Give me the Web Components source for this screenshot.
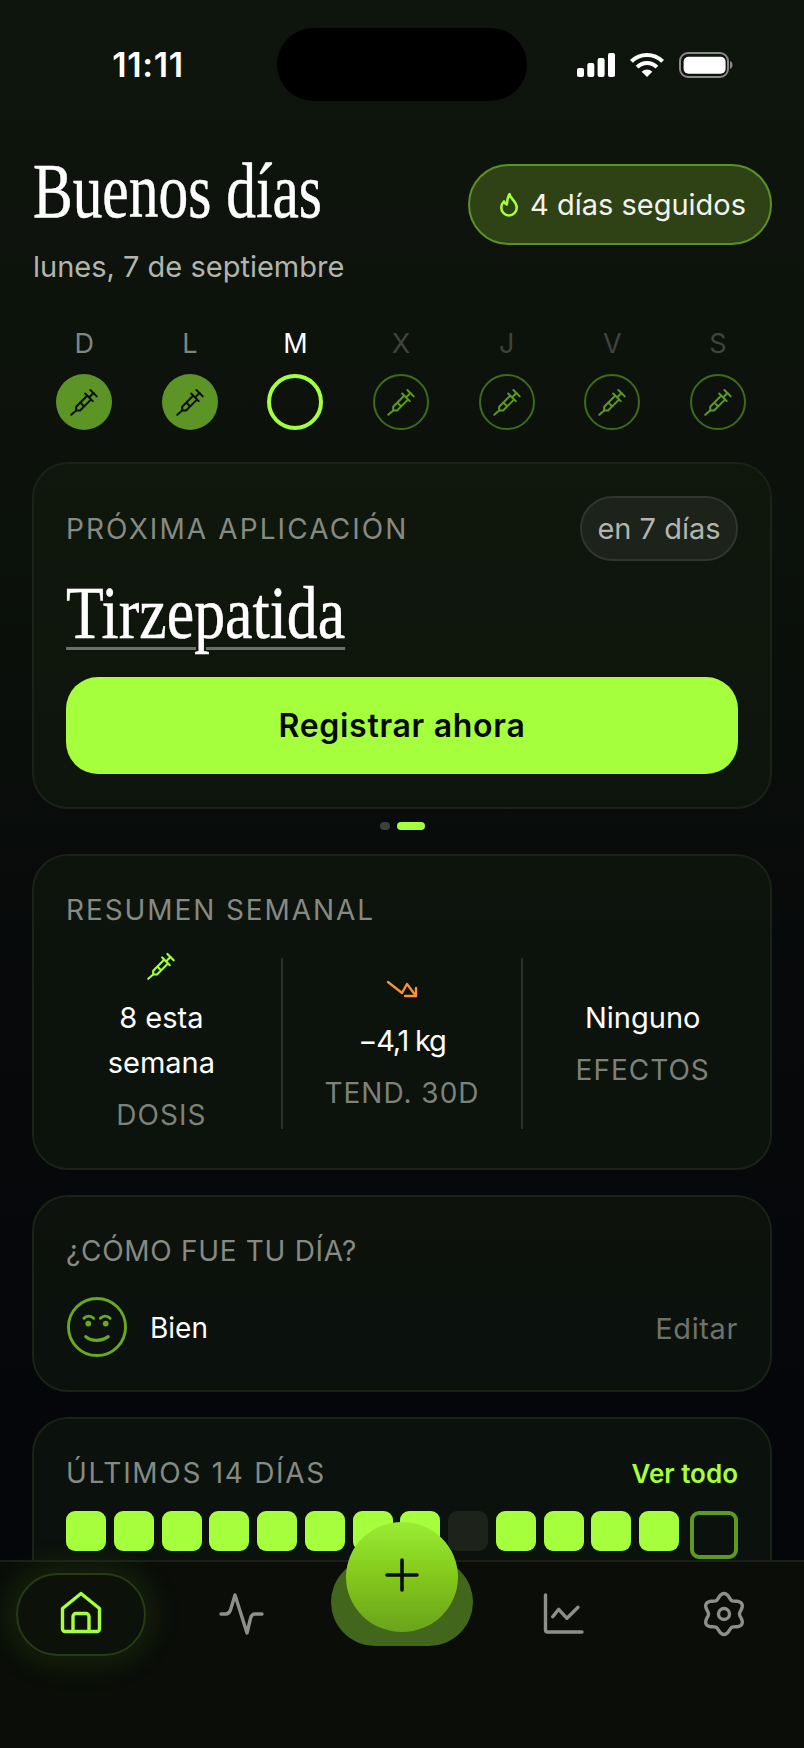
<!DOCTYPE html>
<html lang="es">
<head>
<meta charset="utf-8">
<title>Inicio</title>
<style>
    html, body { margin: 0; padding: 0; background: #07090a; }
    body { width: 804px; height: 1748px; overflow: hidden; }
</style>
</head>
<body>
<app-screen>
    <status-bar></status-bar>
    <home-header></home-header>
    <week-strip></week-strip>
    <next-dose></next-dose>
    <page-dots></page-dots>
    <week-summary></week-summary>
    <day-mood></day-mood>
    <last-days></last-days>
    <tab-bar slot="tabs"></tab-bar>
</app-screen>

<script>
const SANS = `font-family: Inter, "Liberation Sans", sans-serif;`;
const SYRINGE = `
    <path d="M16.500 3.500l4.500 4.500"/><path d="M18.700 5.700l-3 3"/><path d="M12.800 6l5.400 5.400"/>
    <path d="M14.200 7.600l-7.700 7.700v2.700h2.700l7.700-7.700"/><path d="M9.600 12.600l2.200 2.200"/><path d="M6.500 18L3 21"/>`;

class AppScreen extends HTMLElement {
    constructor() {
        super();
        this.attachShadow({mode: "open"}).innerHTML = `
            <style>
                :host {
                    display: flex;
                    flex-direction: column;
                    width: 804px;
                    height: 1748px;
                    color: #fff;
                    background: linear-gradient(180deg, #0e150d 0, #0c120b 500px, #07090a 1000px, #05060a 1500px);
                    ${SANS}
                }
                .scroll { flex: 1; min-height: 0; overflow: hidden; }
            </style>
            <div class="scroll"><slot></slot></div>
            <slot name="tabs"></slot>`;
    }
}

class StatusBar extends HTMLElement {
    constructor() {
        super();
        this.attachShadow({mode: "open"}).innerHTML = `
            <style>
                :host { display: flex; align-items: center; height: 73px; padding: 28px 0 0; position: relative; }
                .time { width: 296px; text-align: center; font-size: 34px; font-weight: 600; letter-spacing: .6px; }
                .island { position: absolute; left: 277px; top: 28px; width: 250px; height: 73px; border-radius: 37px; background: #000; }
                svg { position: absolute; top: 50px; left: 575px; }
            </style>
            <span class="time">11:11</span>
            <div class="island"></div>
            <svg width="160" height="30" viewBox="0 0 160 30" fill="#fff">
                <rect x="2" y="18" width="7" height="9" rx="2"/>
                <rect x="12.300" y="13" width="7" height="14" rx="2"/>
                <rect x="22.600" y="8" width="7" height="19" rx="2"/>
                <rect x="33" y="3" width="7" height="24" rx="2"/>
                <path d="M72 27l-5.300-5.300a7.500 7.500 0 0 1 10.600 0z"/>
                <path d="M62.100 17.100a14 14 0 0 1 19.800 0" fill="none" stroke="#fff" stroke-width="4"/>
                <path d="M56.400 11.400a22 22 0 0 1 31.200 0" fill="none" stroke="#fff" stroke-width="4"/>
                <rect x="105" y="3" width="48" height="24" rx="8" fill="none" stroke="#8a8a8a" stroke-width="2"/>
                <rect x="108.600" y="6.700" width="42" height="17" rx="5"/>
                <path d="M155 11v8c1.500-.5 2.500-2 2.500-4s-1-3.500-2.500-4z" fill="#8a8a8a"/>
            </svg>`;
    }
}

class HomeHeader extends HTMLElement {
    constructor() {
        super();
        this.attachShadow({mode: "open"}).innerHTML = `
            <style>
                :host { display: flex; justify-content: space-between; padding: 52px 32px 0 33px; height: 208px; box-sizing: border-box; }
                h1 {
                    margin: 0; font: 400 78px/76px "Liberation Serif", serif; -webkit-text-stroke: .5px #fff;
                    transform: scaleX(.762); transform-origin: 0 0; white-space: nowrap; width: 287px;
                }
                p { margin: 20px 0 0; font-size: 29px; line-height: 36px; color: #b2b5ae; white-space: nowrap; }
                .streak {
                    display: flex; align-items: center; gap: 11px; box-sizing: border-box;
                    width: 304px; height: 81px; margin-top: 11px; padding-left: 29px;
                    border-radius: 41px; background: #2f4215; border: 2px solid #5c9126;
                    font-size: 29px; color: #f1f3ee; white-space: nowrap;
                }
            </style>
            <div>
                <h1>Buenos días</h1>
                <p>lunes, 7 de septiembre</p>
            </div>
            <div class="streak">
                <svg width="20" height="26" viewBox="0 0 22 28" fill="none" stroke="#a6ff3d" stroke-width="2.800" stroke-linejoin="round">
                    <path d="M11.500 2c1 5 8 8 8 15a8.500 8.500 0 0 1-17 0c0-3 1-5 3-7 .500 2 1.500 3 3 3.500C9 9.500 9.500 5 11.500 2z"/>
                </svg>
                4 días seguidos
            </div>`;
    }
}

class WeekStrip extends HTMLElement {
    constructor() {
        super();
        const days = [["D", "done"], ["L", "done"], ["M", "today"], ["X", ""], ["J", ""], ["V", ""], ["S", ""]];
        const cells = days.map(([d, state]) => `
            <div class="day ${state}">
                <span>${d}</span>
                <div class="ring">${state === "today" ? "" : `
                    <svg width="34" height="34" viewBox="0 0 24 24" fill="none" stroke="currentColor" stroke-width="1.400" stroke-linecap="round" stroke-linejoin="round">${SYRINGE}</svg>`}
                </div>
            </div>`).join("");
        this.attachShadow({mode: "open"}).innerHTML = `
            <style>
                :host { display: grid; grid-template-columns: repeat(7, 105.6px); padding: 0 0 0 31.500px; height: 153px; }
                .day { display: flex; flex-direction: column; align-items: center; }
                span { font-size: 27px; line-height: 32px; margin-top: 19px; height: 32px; color: #3f433e; }
                .done span { color: #81857f; }
                .today span { color: #fff; }
                .ring {
                    box-sizing: border-box; width: 56px; height: 56px; margin-top: 14px; border-radius: 50%;
                    border: 2px solid #3f6a1a; color: #5c9a22;
                    display: flex; align-items: center; justify-content: center;
                }
                .done .ring { background: #5c9426; border: 0; color: #0a0e08; }
                .today .ring { border: 4px solid #a6ff3d; }
            </style>
            ${cells}`;
    }
}

class InfoCard extends HTMLElement {
    constructor() {
        super();
        this.attachShadow({mode: "open"}).innerHTML = `
            <style>
                :host {
                    display: block; box-sizing: border-box; margin: 0 32px 0 32px;
                    border: 2px solid #1b2218; border-radius: 36px; background: rgba(20, 30, 15, .45);
                    padding: 32px;
                }
            </style>
            <slot></slot>`;
    }
}
customElements.define("info-card", InfoCard);

const LABEL = `font-size: 28px; line-height: 36px; letter-spacing: 2.100px; color: #858a83; font-weight: 400; white-space: nowrap;`;

class NextDose extends HTMLElement {
    constructor() {
        super();
        this.attachShadow({mode: "open"}).innerHTML = `
            <style>
                :host { display: block; height: 347px; }
                info-card { height: 347px; }
                .top { display: flex; justify-content: space-between; align-items: center; height: 65px; }
                .label { ${LABEL} }
                .when {
                    box-sizing: border-box; height: 65px; width: 158px; border-radius: 33px;
                    background: #1d221b; border: 2px solid #30352d; color: #b2b5ae;
                    display: flex; align-items: center; justify-content: center; font-size: 29px;
                }
                .drug {
                    margin: 10px 0 0; font: 400 74px/84px "Liberation Serif", serif; width: 279px; white-space: nowrap;
                    -webkit-text-stroke: .5px #fff;
                    transform: scaleX(.835); transform-origin: 0 0;
                    text-decoration: underline; text-decoration-color: #6b6f69; text-decoration-thickness: 3px; text-underline-offset: 9px;
                }
                button {
                    display: block; width: 100%; height: 97px; margin-top: 22px; border: 0; border-radius: 32px;
                    background: #a6ff3d; color: #050805; font: 600 32px Inter, "Liberation Sans", sans-serif; letter-spacing: .7px;
                }
            </style>
            <info-card>
                <div class="top"><span class="label">PRÓXIMA APLICACIÓN</span><span class="when">en 7 días</span></div>
                <div class="drug">Tirzepatida</div>
                <button>Registrar ahora</button>
            </info-card>`;
    }
}

class PageDots extends HTMLElement {
    constructor() {
        super();
        this.attachShadow({mode: "open"}).innerHTML = `
            <style>
                :host { display: flex; justify-content: center; gap: 7px; padding: 13px 0 24px; height: 8px; }
                i { width: 10px; height: 8px; border-radius: 4px; background: #3c403b; }
                i + i { width: 28px; background: #a6ff3d; }
            </style>
            <i></i><i></i>`;
    }
}

class WeekSummary extends HTMLElement {
    constructor() {
        super();
        this.attachShadow({mode: "open"}).innerHTML = `
            <style>
                :host { display: block; height: 316px; }
                info-card { height: 316px; }
                .label { ${LABEL} letter-spacing: 1.900px; margin-top: 4px; }
                .row { display: flex; gap: 24px; height: 171px; margin-top: 30px; }
                .col { flex: 1; display: flex; flex-direction: column; align-items: center; justify-content: center; text-align: center; }
                .rule { width: 2px; background: #2b302a; flex: none; }
                svg { display: block; margin-bottom: 12px; flex: none; }
                .val { font-size: 29px; line-height: 45px; color: #fff; }
                .tight { letter-spacing: -1.200px; }
                .cap { ${LABEL} letter-spacing: 1px; line-height: 45px; margin-top: 8px; color: #7c817a; }
            </style>
            <info-card>
                <div class="label">RESUMEN SEMANAL</div>
                <div class="row">
                    <div class="col">
                        <svg width="34" height="34" viewBox="0 0 24 24" fill="none" stroke="#a6ff3d" stroke-width="1.500" stroke-linecap="round" stroke-linejoin="round">${SYRINGE}</svg>
                        <div class="val">8 esta<br>semana</div>
                        <div class="cap">DOSIS</div>
                    </div>
                    <div class="rule"></div>
                    <div class="col">
                        <svg width="34" height="34" viewBox="0 0 34 34" fill="none" stroke="#f5923a" stroke-width="2.400" stroke-linecap="round" stroke-linejoin="round">
                            <path d="M3 10l14 11 5-9 9 12"/><path d="M31 16v8H20"/>
                        </svg>
                        <div class="val tight">−4,1 kg</div>
                        <div class="cap">TEND. 30D</div>
                    </div>
                    <div class="rule"></div>
                    <div class="col">
                        <div class="val">Ninguno</div>
                        <div class="cap">EFECTOS</div>
                    </div>
                </div>
            </info-card>`;
    }
}

class DayMood extends HTMLElement {
    constructor() {
        super();
        this.attachShadow({mode: "open"}).innerHTML = `
            <style>
                :host { display: block; height: 197px; margin-top: 25px; }
                info-card { height: 197px; }
                .label { ${LABEL} letter-spacing: .7px; margin-top: 4px; }
                .row { display: flex; align-items: center; gap: 23px; margin-top: 28px; height: 60px; }
                svg { margin-left: 1px; flex: none; }
                .row b { font-weight: 400; font-size: 28px; flex: 1; padding-top: 2px; }
                .edit { font-size: 29px; letter-spacing: .6px; color: #6e726b; padding-top: 2px; }
            </style>
            <info-card>
                <div class="label">¿CÓMO FUE TU DÍA?</div>
                <div class="row">
                    <svg width="60" height="60" viewBox="0 0 62 62" fill="none" stroke="#6aa820" stroke-width="3" stroke-linecap="round">
                        <circle cx="31" cy="31" r="29.500"/>
                        <path d="M17.500 22c2.500-3 7.500-3 10 0M34.500 22c2.500-3 7.500-3 10 0"/>
                        <circle cx="22" cy="27.500" r="3" fill="#6aa820" stroke="none"/>
                        <circle cx="40" cy="27.500" r="3" fill="#6aa820" stroke="none"/>
                        <path d="M19.500 41c6 5 16 5 23 0" stroke-width="3.400"/>
                    </svg>
                    <b>Bien</b>
                    <span class="edit">Editar</span>
                </div>
            </info-card>`;
    }
}

class LastDays extends HTMLElement {
    constructor() {
        super();
        const cells = Array.from({length: 13}, (_, i) => `<i class="${i === 8 ? "miss" : ""}"></i>`).join("");
        this.attachShadow({mode: "open"}).innerHTML = `
            <style>
                :host { display: block; margin-top: 25px; }
                info-card { height: 200px; }
                .top { display: flex; justify-content: space-between; align-items: center; margin-top: 4px; }
                .label { ${LABEL} letter-spacing: 1.700px; }
                a { font-size: 26px; font-weight: 600; color: #a6ff3d; }
                .cells { display: flex; gap: 7.750px; margin-top: 20px; }
                i { width: 40px; height: 40px; border-radius: 9px; background: #a6ff3d; flex: none; }
                i.miss { background: #1d221b; }
                i.now { box-sizing: border-box; width: 48px; height: 48px; margin-left: auto; background: none; border: 4px solid #5f9922; }
            </style>
            <info-card>
                <div class="top"><span class="label">ÚLTIMOS 14 DÍAS</span><a>Ver todo</a></div>
                <div class="cells">${cells}<i class="now"></i></div>
            </info-card>`;
    }
}

class TabBar extends HTMLElement {
    constructor() {
        super();
        const icon = body => `<svg width="48" height="48" viewBox="0 0 48 48" fill="none" stroke="currentColor" stroke-width="3.400" stroke-linecap="round" stroke-linejoin="round">${body}</svg>`;
        // six soft lobes, one pointing straight up
        const lobes = [];
        for (let i = 0; i < 120; i++) {
            const a = i / 120 * Math.PI * 2;
            const r = 18 + 2.500 * Math.cos(6 * a);
            lobes.push((24 + r * Math.sin(a)).toFixed(2) + " " + (24 - r * Math.cos(a)).toFixed(2));
        }
        this.attachShadow({mode: "open"}).innerHTML = `
            <style>
                :host {
                    display: block; position: relative; height: 188px; box-sizing: border-box;
                    background: #0a0d08; border-top: 2px solid #1a2015; color: #8e8f8c;
                }
                .home {
                    position: absolute; left: 16px; top: 11px; width: 130px; height: 83px; box-sizing: border-box;
                    border-radius: 42px; border: 2px solid #263b12; background: #0c1209;
                    box-shadow: 0 0 30px 8px rgba(100,170,40,.14); color: #a6ff3d;
                    display: flex; align-items: center; justify-content: center;
                }
                .home svg { margin-top: -5px; }
                .tab { position: absolute; top: 28px; }
                .blob { position: absolute; left: 331px; top: -4px; width: 142px; height: 88px; border-radius: 44px; background: #41661c; }
                .fab {
                    position: absolute; left: 346px; top: -40px; width: 112px; height: 110px; padding-bottom: 4px; box-sizing: border-box; border-radius: 50%;
                    background: linear-gradient(180deg, #9aec33 0, #83c81b 50%, #6aa31b 100%);
                    display: flex; align-items: center; justify-content: center;
                }
            </style>
            <div class="home">${icon(`<path d="M24 5.500L42.500 20.500V41a2.500 2.500 0 0 1-2.500 2.500H8A2.500 2.500 0 0 1 5.500 41V20.500z"/><path d="M16 43.500V28.500a3 3 0 0 1 3-3h10a3 3 0 0 1 3 3V43.500"/>`)}</div>
            <div class="tab" style="left:217px">${icon(`<path d="M4 24h5c2.500 0 3.500-1.500 4.500-4L18 5l12 38 3.500-14.500c.7-3 2-4.500 4.500-4.500h7"/>`)}</div>
            <div class="blob"></div>
            <div class="fab">
                <svg width="40" height="40" viewBox="0 0 40 40" stroke="#0a0e08" stroke-width="3.600" stroke-linecap="round"><path d="M20 5v30M5 20h30"/></svg>
            </div>
            <div class="tab" style="left:540px">${icon(`<path d="M5.500 5v35a2 2 0 0 0 2 2H42"/><path d="M12.700 26.700l6-7.400 8.300 9 11-11"/>`)}</div>
            <div class="tab" style="left:700px">${icon(`<circle cx="24" cy="24" r="5.500"/><path d="M${lobes.join("L")}z"/>`)}</div>`;
    }
}

customElements.define("app-screen", AppScreen);
customElements.define("status-bar", StatusBar);
customElements.define("home-header", HomeHeader);
customElements.define("week-strip", WeekStrip);
customElements.define("next-dose", NextDose);
customElements.define("page-dots", PageDots);
customElements.define("week-summary", WeekSummary);
customElements.define("day-mood", DayMood);
customElements.define("last-days", LastDays);
customElements.define("tab-bar", TabBar);
</script>
</body>
</html>
